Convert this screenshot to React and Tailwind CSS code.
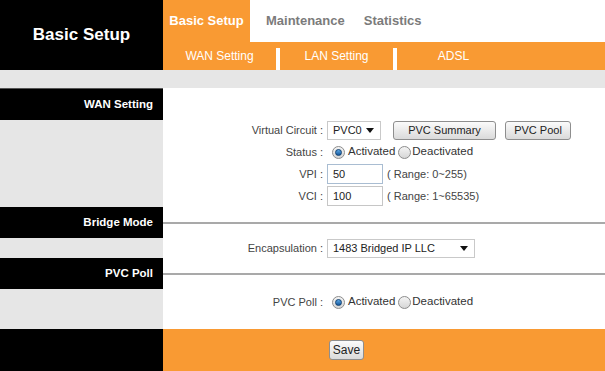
import React from 'react';

const ORANGE = 'bg-[#f99a33]';

const Radio = ({ checked }) => (
  <span className="inline-flex w-[13px] h-[13px] rounded-full border border-[#8c8c8c] bg-gradient-to-b from-[#f4f4f4] to-[#d6d6d6] items-center justify-center shrink-0">
    {checked && (
      <span className="w-[7px] h-[7px] rounded-full bg-gradient-to-b from-[#5aa7e6] to-[#14589c] border border-[#0f3f70]" />
    )}
  </span>
);

const Caret = () => (
  <svg width="8" height="5" viewBox="0 0 8 5" className="shrink-0">
    <path d="M0 0 L8 0 L4 5 Z" fill="#111" />
  </svg>
);

const Select = ({ value, width }) => (
  <div className={`flex items-center justify-between h-[19px] border border-[#c9c9c9] bg-white pl-[5px] pr-[6px] ${width}`}>
    <span className="text-[#222]">{value}</span>
    <Caret />
  </div>
);

const Btn = ({ children, className = '' }) => (
  <div className={`flex items-center justify-center h-[19px] border border-[#8e8e8e] rounded-[3px] bg-gradient-to-b from-[#fbfbfb] to-[#dadada] text-[#222] ${className}`}>
    {children}
  </div>
);

const Field = ({ value, focused }) => (
  <div className={`w-[56px] h-[20px] border ${focused ? 'border-[#a9bdd2]' : 'border-[#c6c6c6]'} bg-white flex items-center pl-[5px] text-[#222]`}>
    {value}
  </div>
);

const Row = ({ label, h, children }) => (
  <div className={`flex items-center ${h}`}>
    <div className="w-[160px] text-right text-[#444] whitespace-nowrap">{label}</div>
    <div className="ml-[4px] flex items-center">{children}</div>
  </div>
);

const SectionBar = ({ title, line }) => (
  <div className="flex h-[31px]">
    <div className="w-[163px] bg-black flex items-center justify-end pr-[10px] text-white font-bold text-[11.5px]">
      {title}
    </div>
    <div className="flex-1 flex items-center">
      {line && <div className="w-full h-[2px] bg-[#a9a9a9]" />}
    </div>
  </div>
);

const Content = ({ h, children }) => (
  <div className={`flex ${h}`}>
    <div className="w-[163px] bg-[#e6e6e6]" />
    <div className="flex-1 flex flex-col">{children}</div>
  </div>
);

const Status = () => (
  <div className="flex items-center text-[#333] text-[11.5px]">
    <span className="ml-[5px] mr-[3px] flex"><Radio checked /></span>
    <span>Activated</span>
    <span className="ml-[3px] mr-[1px] flex"><Radio /></span>
    <span>Deactivated</span>
  </div>
);

export default function App() {
  return (
    <div className="w-[605px] h-[371px] overflow-hidden bg-white font-['Liberation_Sans',Arial,sans-serif] text-[11px]">
      {/* header */}
      <div className="flex h-[70px]">
        <div className="w-[163px] bg-black flex items-center justify-center text-white font-bold text-[17px]">
          Basic Setup
        </div>
        <div className="flex-1 flex flex-col">
          <div className="h-[42px] flex items-stretch font-bold text-[13px]">
            <div className={`w-[87px] ${ORANGE} flex items-center justify-center text-white`}>Basic Setup</div>
            <div className="ml-[16px] flex items-center text-[#7b7b7b]">Maintenance</div>
            <div className="ml-[19px] flex items-center text-[#7b7b7b]">Statistics</div>
          </div>
          <div className={`h-[28px] ${ORANGE} flex text-white text-[12px]`}>
            <div className="w-[113px] flex items-center justify-center">WAN Setting</div>
            <div className="w-[4px] h-[22px] self-end bg-white" />
            <div className="w-[113px] flex items-center justify-center">LAN Setting</div>
            <div className="w-[4px] h-[22px] self-end bg-white" />
            <div className="w-[113px] flex items-center justify-center">ADSL</div>
          </div>
        </div>
      </div>
      <div className="h-[18px] bg-[#e6e6e6]" />
      <div className="h-[1px] w-[163px] bg-[#555]" />

      <SectionBar title="WAN Setting" />
      <Content h="h-[87px]">
        <Row label="Virtual Circuit :" h="h-[21px]">
          <Select value="PVC0" width="w-[54px]" />
          <Btn className="ml-[12px] w-[103px]">PVC Summary</Btn>
          <Btn className="ml-[9px] w-[66px]">PVC Pool</Btn>
        </Row>
        <Row label="Status :" h="h-[22px]">
          <Status />
        </Row>
        <Row label="VPI :" h="h-[22px]">
          <Field value="50" focused />
          <span className="ml-[4px] text-[#444]">( Range: 0~255)</span>
        </Row>
        <Row label="VCI :" h="h-[22px]">
          <Field value="100" />
          <span className="ml-[4px] text-[#444]">( Range: 1~65535)</span>
        </Row>
      </Content>

      <SectionBar title="Bridge Mode" line />
      <Content h="h-[20px]">
        <Row label="Encapsulation :" h="h-[20px]">
          <Select value="1483 Bridged IP LLC" width="w-[148px]" />
        </Row>
      </Content>

      <SectionBar title="PVC Poll" line />
      <Content h="h-[40px]">
        <Row label="PVC Poll :" h="h-[26px]">
          <Status />
        </Row>
      </Content>

      <div className="flex h-[42px]">
        <div className="w-[163px] bg-black" />
        <div className={`flex-1 ${ORANGE} flex items-center`}>
          <Btn className="ml-[166px] w-[35px] h-[20px] text-[12px]">Save</Btn>
        </div>
      </div>
    </div>
  );
}
